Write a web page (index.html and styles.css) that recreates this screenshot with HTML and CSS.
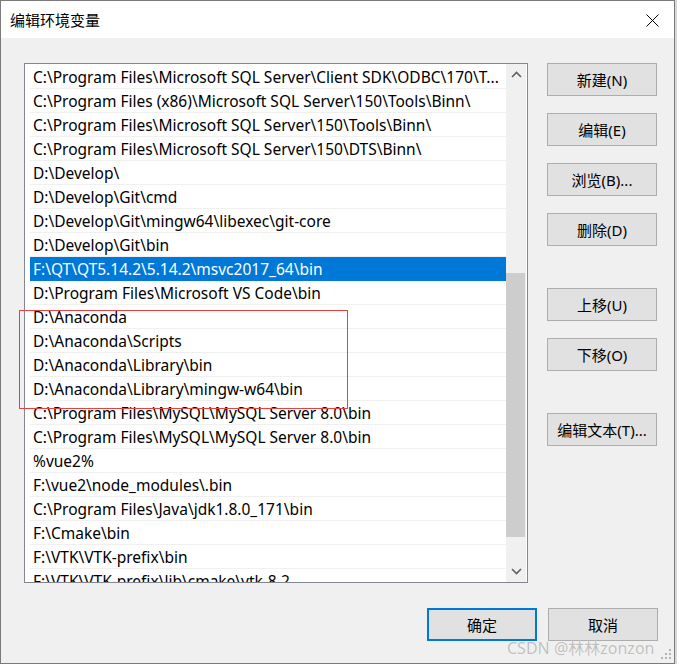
FILE: index.html
```html
<!DOCTYPE html>
<html>
  <head>
    <meta charset='utf-8'>
    <title>编辑环境变量</title>
    <link rel="stylesheet" href="styles.css">
  </head>
  <body>
    <div class='window'>
      <div class='titlebar'>
        <span class='title'>编辑环境变量</span>
        <svg class='close' width='13' height='13' viewBox='0 0 13 13'>
          <path d='M0.5 0.5 L12.5 12.5 M12.5 0.5 L0.5 12.5' stroke='#000' stroke-width='1' fill='none'/>
        </svg>
      </div>
      <div class='client'>
        <div class='main'>
          <div class='listbox'>
            <div class='rows'>
              <div class='row'>C:\Program Files\Microsoft SQL Server\Client SDK\ODBC\170\T...</div>
              <div class='row'>C:\Program Files (x86)\Microsoft SQL Server\150\Tools\Binn\</div>
              <div class='row'>C:\Program Files\Microsoft SQL Server\150\Tools\Binn\</div>
              <div class='row'>C:\Program Files\Microsoft SQL Server\150\DTS\Binn\</div>
              <div class='row'>D:\Develop\</div>
              <div class='row'>D:\Develop\Git\cmd</div>
              <div class='row'>D:\Develop\Git\mingw64\libexec\git-core</div>
              <div class='row'>D:\Develop\Git\bin</div>
              <div class='row selected'>F:\QT\QT5.14.2\5.14.2\msvc2017_64\bin</div>
              <div class='row'>D:\Program Files\Microsoft VS Code\bin</div>
              <div class='row'>D:\Anaconda</div>
              <div class='row'>D:\Anaconda\Scripts</div>
              <div class='row'>D:\Anaconda\Library\bin</div>
              <div class='row'>D:\Anaconda\Library\mingw-w64\bin</div>
              <div class='row'>C:\Program Files\MySQL\MySQL Server 8.0\bin</div>
              <div class='row'>C:\Program Files\MySQL\MySQL Server 8.0\bin</div>
              <div class='row'>%vue2%</div>
              <div class='row'>F:\vue2\node_modules\.bin</div>
              <div class='row'>C:\Program Files\Java\jdk1.8.0_171\bin</div>
              <div class='row'>F:\Cmake\bin</div>
              <div class='row'>F:\VTK\VTK-prefix\bin</div>
              <div class='row'>F:\VTK\VTK-prefix\lib\cmake\vtk-8.2</div>
            </div>
            <div class='scrollbar'>
              <div class='arrow up'>
                <svg width='11' height='7' viewBox='0 0 11 7'>
                  <path d='M1 6 L5.5 1.5 L10 6' stroke='#606060' stroke-width='1.6' fill='none'/>
                </svg>
              </div>
              <div class='track'>
                <div class='thumb'></div>
              </div>
              <div class='arrow down'>
                <svg width='11' height='7' viewBox='0 0 11 7'>
                  <path d='M1 1 L5.5 5.5 L10 1' stroke='#606060' stroke-width='1.6' fill='none'/>
                </svg>
              </div>
            </div>
          </div>
          <div class='side'>
            <button class='btn'>新建(N)</button>
            <button class='btn'>编辑(E)</button>
            <button class='btn'>浏览(B)...</button>
            <button class='btn'>删除(D)</button>
            <button class='btn group'>上移(U)</button>
            <button class='btn'>下移(O)</button>
            <button class='btn group'>编辑文本(T)...</button>
          </div>
        </div>
        <div class='footer'>
          <button class='btn default'>确定</button>
          <button class='btn'>取消</button>
        </div>
      </div>
      <div class='mark'></div>
      <div class='watermark'>CSDN @林林zonzon</div>
      <svg class='grip' width='11' height='11' viewBox='0 0 11 11'>
        <rect x='8' y='0' width='2' height='2' fill='#b4b4b4'/>
        <rect x='4' y='4' width='2' height='2' fill='#b4b4b4'/>
        <rect x='8' y='4' width='2' height='2' fill='#b4b4b4'/>
        <rect x='0' y='8' width='2' height='2' fill='#b4b4b4'/>
        <rect x='4' y='8' width='2' height='2' fill='#b4b4b4'/>
        <rect x='8' y='8' width='2' height='2' fill='#b4b4b4'/>
      </svg>
    </div>
  </body>
</html>
```

FILE: styles.css
```css
body {
  margin: 0;
  background-color: #d8d8d8;
  font-family: "Noto Sans", "Noto Sans CJK SC", sans-serif;
  font-size: 15px;
}
.window {
  position: relative;
  width: 673px;
  height: 662px;
  border: solid 1px #7a7a7a;
  background-color: #f0f0f0;
  display: flex;
  flex-direction: column;
}
.titlebar {
  height: 37px;
  background-color: #fff;
  display: flex;
  align-items: center;
  padding-left: 9px;
  padding-right: 15px;
}
.title {
  flex: 1;
  color: #000;
  font-family: "Noto Sans CJK SC", sans-serif;
  font-size: 15px;
}
.close {
  margin-top: 1px;
}
.client {
  flex: 1;
  display: flex;
  flex-direction: column;
  padding: 25px 0 0 23px;
}
.main {
  display: flex;
}
.listbox {
  width: 496px;
  height: 517px;
  border: solid 1px #828790;
  background-color: #fff;
  padding: 1px 1px 0 5px;
  display: flex;
  overflow: hidden;
}
.rows {
  width: 476px;
  flex: none;
  overflow: hidden;
}
.row {
  height: 24px;
  box-sizing: border-box;
  border-bottom: solid 1px #f0f0f0;
  line-height: 24px;
  padding-left: 3px;
  white-space: nowrap;
  overflow: hidden;
  color: #000;
  font-size: 15.5px;
}
.row.selected {
  background-color: #0078d7;
  border-bottom-color: #0078d7;
  color: #fff;
}
.scrollbar {
  width: 20px;
  flex: none;
  background-color: #f0f0f0;
  display: flex;
  flex-direction: column;
  margin-top: -1px;
}
.arrow {
  height: 21px;
  display: flex;
  align-items: center;
  justify-content: center;
}
.track {
  flex: 1;
  padding-top: 188px;
  padding-bottom: 24px;
  display: flex;
  flex-direction: column;
}
.thumb {
  flex: 1;
  background-color: #cdcdcd;
  margin-right: 1px;
}
.side {
  display: flex;
  flex-direction: column;
  gap: 17px;
  margin-left: 19px;
}
.btn {
  width: 110px;
  height: 33px;
  box-sizing: border-box;
  border: solid 1px #adadad;
  background-color: #e1e1e1;
  color: #000;
  font-family: "Noto Sans", "Noto Sans CJK SC", sans-serif;
  font-size: 15px;
  padding: 0;
}
.btn.group {
  margin-top: 25px;
}
.btn.default {
  border: solid 2px #0078d7;
}
.footer {
  display: flex;
  justify-content: flex-end;
  gap: 11px;
  padding-right: 16px;
  margin-top: 25px;
}
.mark {
  position: absolute;
  left: 18px;
  top: 309px;
  width: 327px;
  height: 97px;
  border: solid 1px #e8413f;
}
.watermark {
  position: absolute;
  left: 506px;
  top: 634px;
  font-family: "Noto Sans", "Noto Sans CJK SC", sans-serif;
  font-size: 16px;
  color: rgba(150, 150, 150, 0.6);
  text-shadow: 0 0 1px #fff;
}
.grip {
  position: absolute;
  left: 660px;
  top: 648px;
}
```
